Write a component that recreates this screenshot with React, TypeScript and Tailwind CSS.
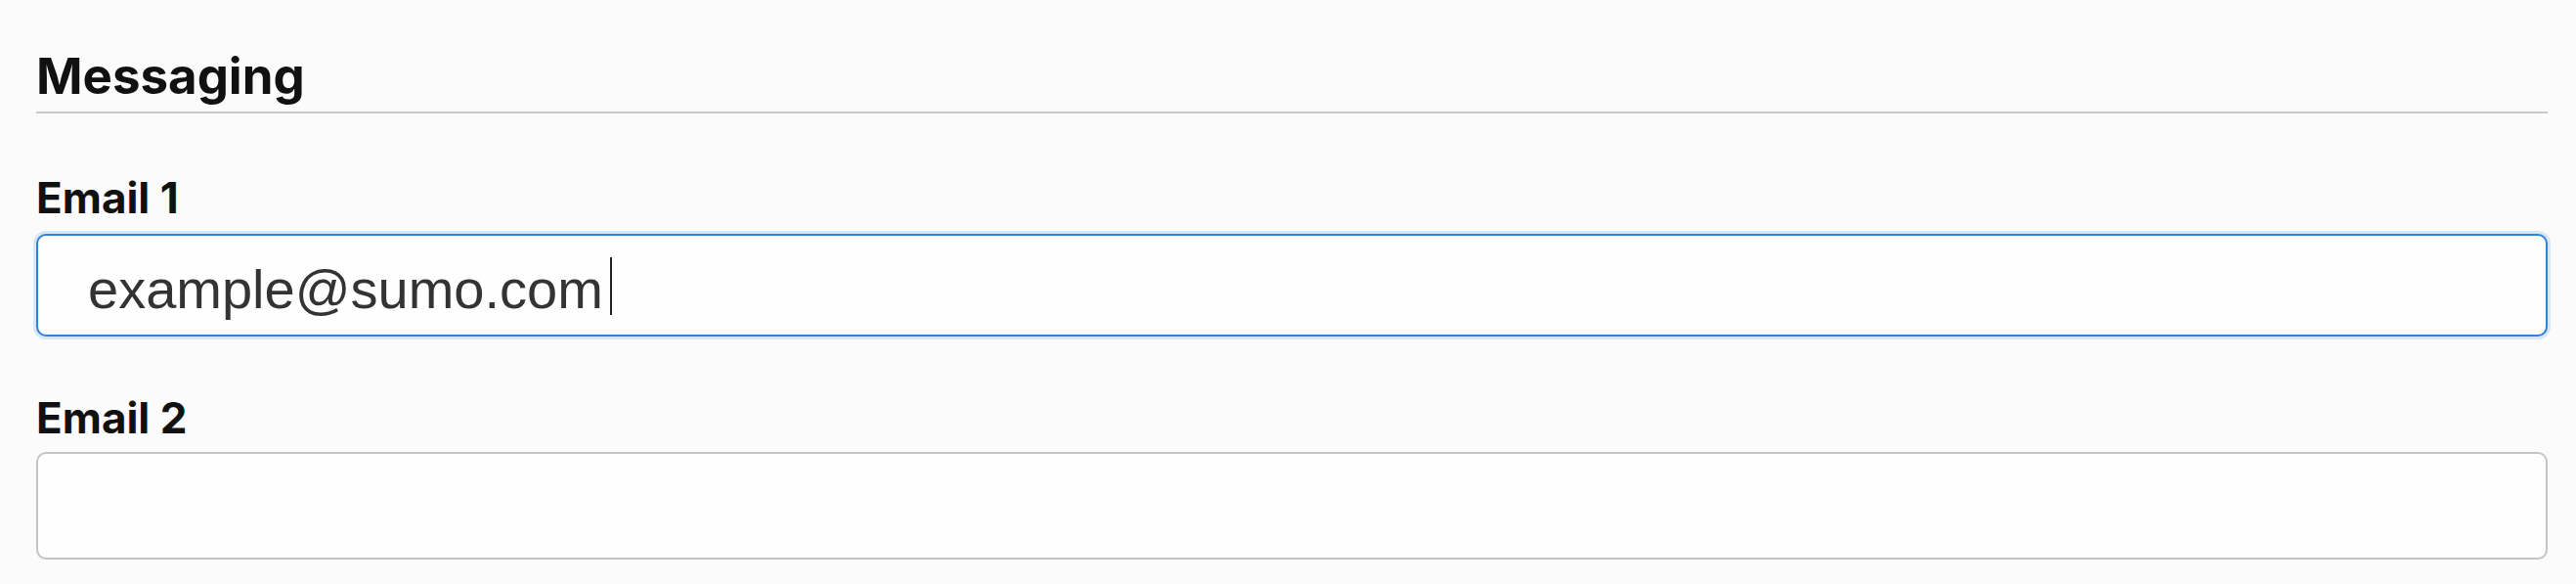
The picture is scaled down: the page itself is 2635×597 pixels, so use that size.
export default function App() {
  const fields = [
    { label: "Email 1", value: "example@sumo.com", focused: true },
    { label: "Email 2", value: "", focused: false },
  ];

  return (
    <div className="h-screen w-full overflow-hidden bg-[#fbfbfb] pl-[37px] pr-[29px] pt-[47px] font-['Inter','Liberation_Sans',sans-serif]">
      <h2 className="border-b-2 border-[#c8c8c8] pb-[5px] text-[51px] leading-[62px] font-bold text-[#111]">
        Messaging
      </h2>

      <div className="mt-[60px] flex flex-col gap-[57px]">
        {fields.map((f) => (
          <div key={f.label} className="flex flex-col">
            <label className="text-[44px] leading-[52px] font-bold text-[#111]">
              {f.label}
            </label>
            <div
              className={`flex items-center rounded-[10px] border-2 bg-[#fefefe] pl-[51px] pt-[9px] ${
                f.focused
                  ? "mt-[11px] h-[105px] border-[#2f80d6] shadow-[0_0_0_3px_rgba(66,140,230,0.18)]"
                  : "mt-[9px] h-[110px] border-[#c4c4c4]"
              }`}
            >
              {f.value && (
                <span className="font-['Liberation_Sans',Arial,sans-serif] text-[56px] leading-[62px] text-[#333]">
                  {f.value}
                </span>
              )}
              {f.focused && (
                <span className="ml-[7px] -mt-[8px] h-[59px] w-[2px] bg-[#222]" />
              )}
            </div>
          </div>
        ))}
      </div>
    </div>
  );
}
